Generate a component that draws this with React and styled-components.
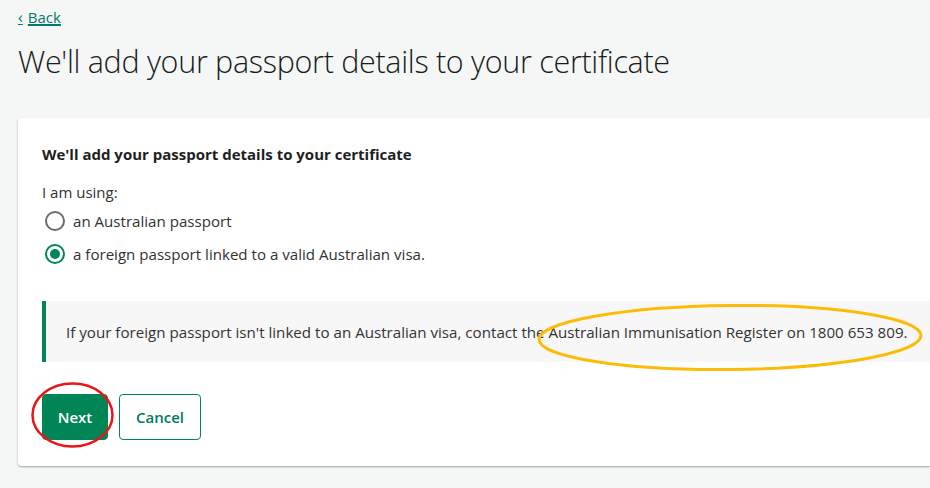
import React, { useState } from "react";
import styled, { createGlobalStyle } from "styled-components";

const GlobalStyle = createGlobalStyle`
    html, body {
        margin: 0;
        padding: 0;
        background: #f4f7f6;
        overflow: hidden;
    }
    body {
        font-family: "Open Sans", "Noto Sans", sans-serif;
        color: #313131;
    }
`;

const options = [
    { id: "au", label: "an Australian passport" },
    { id: "foreign", label: "a foreign passport linked to a valid Australian visa." },
];

const App = () => {
    const [selected, setSelected] = useState("foreign");

    return (
        <>
            <GlobalStyle />
            <Page>
                <BackLink href="#">
                    <Chevron>‹</Chevron>
                    <span>Back</span>
                </BackLink>
                <PageTitle>We'll add your passport details to your certificate</PageTitle>
                <Card>
                    <CardTitle>We'll add your passport details to your certificate</CardTitle>
                    <Fieldset>
                        <Legend>I am using:</Legend>
                        {options.map((opt) => (
                            <RadioRow key={opt.id} onClick={() => setSelected(opt.id)}>
                                <RadioCircle $checked={selected === opt.id} />
                                <RadioLabel>{opt.label}</RadioLabel>
                            </RadioRow>
                        ))}
                    </Fieldset>
                    <InfoBox>
                        If your foreign passport isn't linked to an Australian visa, contact the
                        Australian Immunisation Register on 1800 653 809.
                    </InfoBox>
                    <ButtonRow>
                        <PrimaryButton>Next</PrimaryButton>
                        <SecondaryButton>Cancel</SecondaryButton>
                    </ButtonRow>
                </Card>
                <Annotations width="930" height="488" viewBox="0 0 930 488">
                    <ellipse cx="72.5" cy="415" rx="40" ry="31.5" fill="none" stroke="#e8161b" strokeWidth="2.5" />
                    <ellipse
                        cx="730"
                        cy="337.5"
                        rx="191"
                        ry="32"
                        fill="none"
                        stroke="#fbbc09"
                        strokeWidth="3"
                        transform="rotate(-0.6 730 337.5)"
                    />
                </Annotations>
            </Page>
        </>
    );
};

export default App;

const Page = styled.div`
    position: relative;
    width: 930px;
    height: 488px;
    box-sizing: border-box;
    padding: 6px 0 0 18px;
`;

const BackLink = styled.a`
    display: inline-flex;
    align-items: center;
    gap: 5px;
    color: #00796b;
    font-size: 15px;
    line-height: 22px;
    span {
        text-decoration: underline;
        text-underline-offset: 2px;
    }
`;

const Chevron = styled.span`
    font-size: 16px;
    && {
        text-decoration: none;
    }
`;

const PageTitle = styled.h1`
    margin: 12px 0 0;
    font-weight: 300;
    font-size: 30.5px;
    line-height: 42px;
    color: #1b1b1b;
    letter-spacing: -0.3px;
`;

const Card = styled.div`
    margin-top: 36px;
    width: 912px;
    box-sizing: border-box;
    background: #ffffff;
    border-radius: 4px 0 0 4px;
    box-shadow: 0 1px 2px rgba(0, 0, 0, 0.35);
    padding: 25px 0 26px 24px;
`;

const CardTitle = styled.h2`
    margin: 0;
    font-size: 15px;
    font-weight: 700;
    line-height: 22px;
    color: #1e1e1e;
`;

const Fieldset = styled.div`
    margin-top: 16px;
    display: flex;
    flex-direction: column;
`;

const Legend = styled.div`
    font-size: 15px;
    line-height: 22px;
    margin-bottom: 1px;
`;

const RadioRow = styled.label`
    display: flex;
    align-items: center;
    gap: 8px;
    height: 33px;
    cursor: pointer;
`;

const RadioCircle = styled.span`
    width: 20px;
    height: 20px;
    box-sizing: border-box;
    border-radius: 50%;
    border: 2px solid ${(p) => (p.$checked ? "#008556" : "#6b6b6b")};
    display: flex;
    align-items: center;
    justify-content: center;
    margin-left: 3px;
    &::after {
        content: "";
        width: 10px;
        height: 10px;
        border-radius: 50%;
        background: #008556;
        display: ${(p) => (p.$checked ? "block" : "none")};
    }
`;

const RadioLabel = styled.span`
    font-size: 15.1px;
    line-height: 22px;
`;

const InfoBox = styled.div`
    margin-top: 31px;
    background: #f7f7f7;
    border-left: 4px solid #008556;
    padding: 20px 20px 19px 20px;
    font-size: 15.15px;
    line-height: 22px;
    color: #333333;
`;

const ButtonRow = styled.div`
    display: flex;
    gap: 11px;
    margin-top: 32px;
`;

const BaseButton = styled.button`
    height: 46px;
    box-sizing: border-box;
    border-radius: 4px;
    font-family: "Open Sans", "Noto Sans", sans-serif;
    font-size: 15px;
    font-weight: 600;
    padding: 0 14px;
    cursor: pointer;
`;

const PrimaryButton = styled(BaseButton)`
    width: 66px;
    background: #008556;
    color: #ffffff;
    border: 1px solid #008556;
`;

const SecondaryButton = styled(BaseButton)`
    width: 82px;
    background: #ffffff;
    color: #007a5e;
    border: 1px solid #008556;
`;

const Annotations = styled.svg`
    position: absolute;
    left: 0;
    top: 0;
    pointer-events: none;
`;
